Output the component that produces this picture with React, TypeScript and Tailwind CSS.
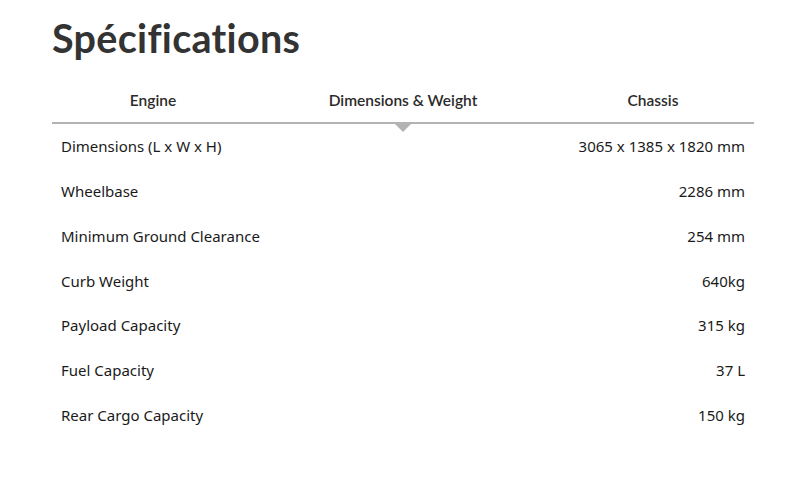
const tabs = ["Engine", "Dimensions & Weight", "Chassis"];

const specs: [string, string][] = [
  ["Dimensions (L x W x H)", "3065 x 1385 x 1820 mm"],
  ["Wheelbase", "2286 mm"],
  ["Minimum Ground Clearance", "254 mm"],
  ["Curb Weight", "640kg"],
  ["Payload Capacity", "315 kg"],
  ["Fuel Capacity", "37 L"],
  ["Rear Cargo Capacity", "150 kg"],
];

export default function App() {
  const active = 1;

  return (
    <div className="min-h-[503px] w-full bg-white px-[52px] pt-[18px] font-['Noto_Sans',sans-serif] text-[#1a1a1a]">
      <div className="w-[702px]">
        <h1 className="font-['Lato',sans-serif] text-[39.5px] font-bold leading-[40px] tracking-[0.3px] text-[#333333]">
          Spécifications
        </h1>

        <div className="relative mt-[22px] border-b-2 border-[#b3b3b3]">
          <div className="-mx-[24px] grid h-[42px] grid-cols-3">
            {tabs.map((t, i) => (
              <div
                key={t}
                className="relative flex items-center justify-center font-['Lato',sans-serif] text-[15.5px] font-semibold text-[#2b2b2b]"
              >
                {t}
                {i === active ? (
                  <span className="absolute -bottom-[10px] left-1/2 h-0 w-0 -translate-x-1/2 border-x-[8px] border-t-[8px] border-x-transparent border-t-[#b3b3b3]" />
                ) : null}
              </div>
            ))}
          </div>
        </div>

        <div className="flex flex-col">
          {specs.map(([label, value]) => (
            <div
              key={label}
              className="flex h-[44.8px] items-center justify-between px-[9px] text-[15px]"
            >
              <span>{label}</span>
              <span>{value}</span>
            </div>
          ))}
        </div>
      </div>
    </div>
  );
}
